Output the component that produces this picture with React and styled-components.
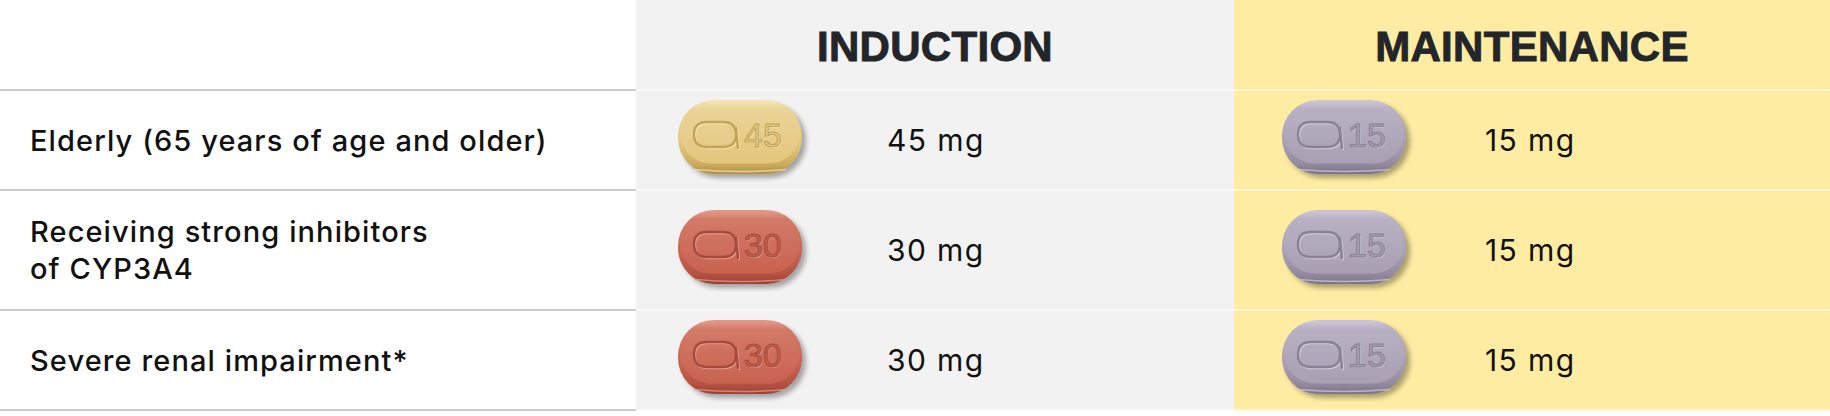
import React, { useId } from 'react';
import styled, { createGlobalStyle } from 'styled-components';

const GlobalStyle = createGlobalStyle`
  html, body {
    margin: 0;
    padding: 0;
    background: #ffffff;
  }
  body {
    font-family: Inter, "Liberation Sans", Arial, sans-serif;
    color: #111111;
  }
`;

const tones = {
  plain: { bg: '#ffffff', line: '#cccccc' },
  gray: { bg: '#f2f2f2', line: '#fbfbfb' },
  yellow: { bg: '#feeca3', line: '#fff5d2' },
};

const Table = styled.div`
  display: grid;
  grid-template-columns: 636px 598px 1fr;
  grid-template-rows: 89px 100px 120px 102px;
  width: 1830px;
`;

const HeadCell = styled.div`
  display: flex;
  align-items: center;
  justify-content: center;
  padding-top: 4px;
  background: ${p => tones[p.$tone].bg};
  font-family: "Liberation Sans", Arial, sans-serif;
  font-weight: 700;
  font-size: 42px;
  letter-spacing: 0.3px;
  color: #222529;
  -webkit-text-stroke: 0.9px #222529;
`;

const Cell = styled.div`
  display: flex;
  align-items: center;
  background: ${p => tones[p.$tone].bg};
  border-top: 2px solid ${p => tones[p.$tone].line};
  border-bottom: ${p => (p.$last ? `2px solid ${tones[p.$tone].line}` : 'none')};
`;

const Label = styled(Cell)`
  padding-left: 30px;
  font-size: 29px;
  font-weight: 500;
  line-height: 37px;
  letter-spacing: 1.1px;
`;

const Dose = styled(Cell)`
  display: grid;
  grid-template-columns: 251px auto;
  align-items: center;
`;

const PillSlot = styled.div`
  padding-left: ${p => p.$inset}px;
  display: flex;
  align-items: center;
`;

const Amount = styled.span`
  font-size: 30px;
  font-weight: 400;
  letter-spacing: 1.4px;
`;

const palettes = {
  yellow: { hi: '#f6e6b2', top: '#ebd497', mid: '#e2c67c', edge: '#cdad5f', rim: '#b39148', ink: '#c3a358', fill: '#e0c67f', glint: '#f5e5ae' },
  red: { hi: '#e39a89', top: '#d27a68', mid: '#c9624f', edge: '#b65343', rim: '#9c4133', ink: '#a84a3b', fill: '#c25e4c', glint: '#e4a191' },
  purple: { hi: '#cdc6d7', top: '#b8b0c3', mid: '#a89fb3', edge: '#958ba1', rim: '#7c7289', ink: '#8a8097', fill: '#a59cb0', glint: '#d3cddb' },
};

// engraved "a" mark: rounded box with a short tail on the right
const logoPath = 'M31 24 H47 Q60 24 60 36.5 Q60 49 47 49 H31 Q18 49 18 36.5 Q18 24 31 24 Z M60 30 L62 50';

const Pill = ({ color, strength }) => {
  const id = useId().replace(/:/g, '');
  const c = palettes[color];
  return (
    <svg width="134" height="84" viewBox="0 0 134 84">
      <defs>
        <linearGradient id={`b${id}`} x1="0" y1="0" x2="0" y2="1">
          <stop offset="0" stopColor={c.hi} />
          <stop offset="0.1" stopColor={c.top} />
          <stop offset="0.6" stopColor={c.mid} />
          <stop offset="0.86" stopColor={c.edge} />
          <stop offset="1" stopColor={c.rim} />
        </linearGradient>
        <linearGradient id={`f${id}`} x1="0" y1="0" x2="0" y2="1">
          <stop offset="0" stopColor={c.hi} />
          <stop offset="0.12" stopColor={c.top} />
          <stop offset="1" stopColor={c.mid} />
        </linearGradient>
        <filter id={`s${id}`} x="-20%" y="-20%" width="140%" height="140%">
          <feGaussianBlur stdDeviation="2.6" />
        </filter>
      </defs>
      <rect x="6" y="6" width="124" height="74" rx="36" fill="#000" opacity="0.32" filter={`url(#s${id})`} />
      <rect x="2" y="2" width="124" height="74" rx="36" fill={`url(#b${id})`} />
      <rect x="4" y="3.5" width="120" height="62" rx="31" fill={`url(#f${id})`} />
      <path d="M18 71.5 Q64 75.5 110 71.5" stroke={c.glint} strokeWidth="1.6" fill="none" opacity="0.7" />
      <g fill="none" strokeWidth="2.4" strokeLinecap="round">
        <path d={logoPath} stroke={c.glint} transform="translate(0.9 1)" />
        <path d={logoPath} stroke={c.ink} />
      </g>
      <g fontFamily="'Liberation Sans', Arial, sans-serif" fontWeight="400" fontSize="34">
        <text x="68.9" y="50" fill={c.glint}>{strength}</text>
        <text x="68" y="49" fill={c.fill} stroke={c.ink} strokeWidth="1">{strength}</text>
      </g>
    </svg>
  );
};

const rows = [
  { label: 'Elderly (65 years of age and older)', induction: '45', maintenance: '15' },
  { label: <>Receiving strong inhibitors<br />of CYP3A4</>, induction: '30', maintenance: '15' },
  { label: 'Severe renal impairment*', induction: '30', maintenance: '15' },
];

const pillColor = { '45': 'yellow', '30': 'red', '15': 'purple' };

export default function App() {
  return (
    <>
      <GlobalStyle />
      <Table>
        <HeadCell $tone="plain" />
        <HeadCell $tone="gray">INDUCTION</HeadCell>
        <HeadCell $tone="yellow">MAINTENANCE</HeadCell>
        {rows.map((row, i) => {
          const last = i === rows.length - 1;
          return (
            <React.Fragment key={i}>
              <Label $tone="plain" $last={last}>{row.label}</Label>
              <Dose $tone="gray" $last={last}>
                <PillSlot $inset={40}>
                  <Pill color={pillColor[row.induction]} strength={row.induction} />
                </PillSlot>
                <Amount>{row.induction} mg</Amount>
              </Dose>
              <Dose $tone="yellow" $last={last}>
                <PillSlot $inset={46}>
                  <Pill color={pillColor[row.maintenance]} strength={row.maintenance} />
                </PillSlot>
                <Amount>{row.maintenance} mg</Amount>
              </Dose>
            </React.Fragment>
          );
        })}
      </Table>
    </>
  );
}
